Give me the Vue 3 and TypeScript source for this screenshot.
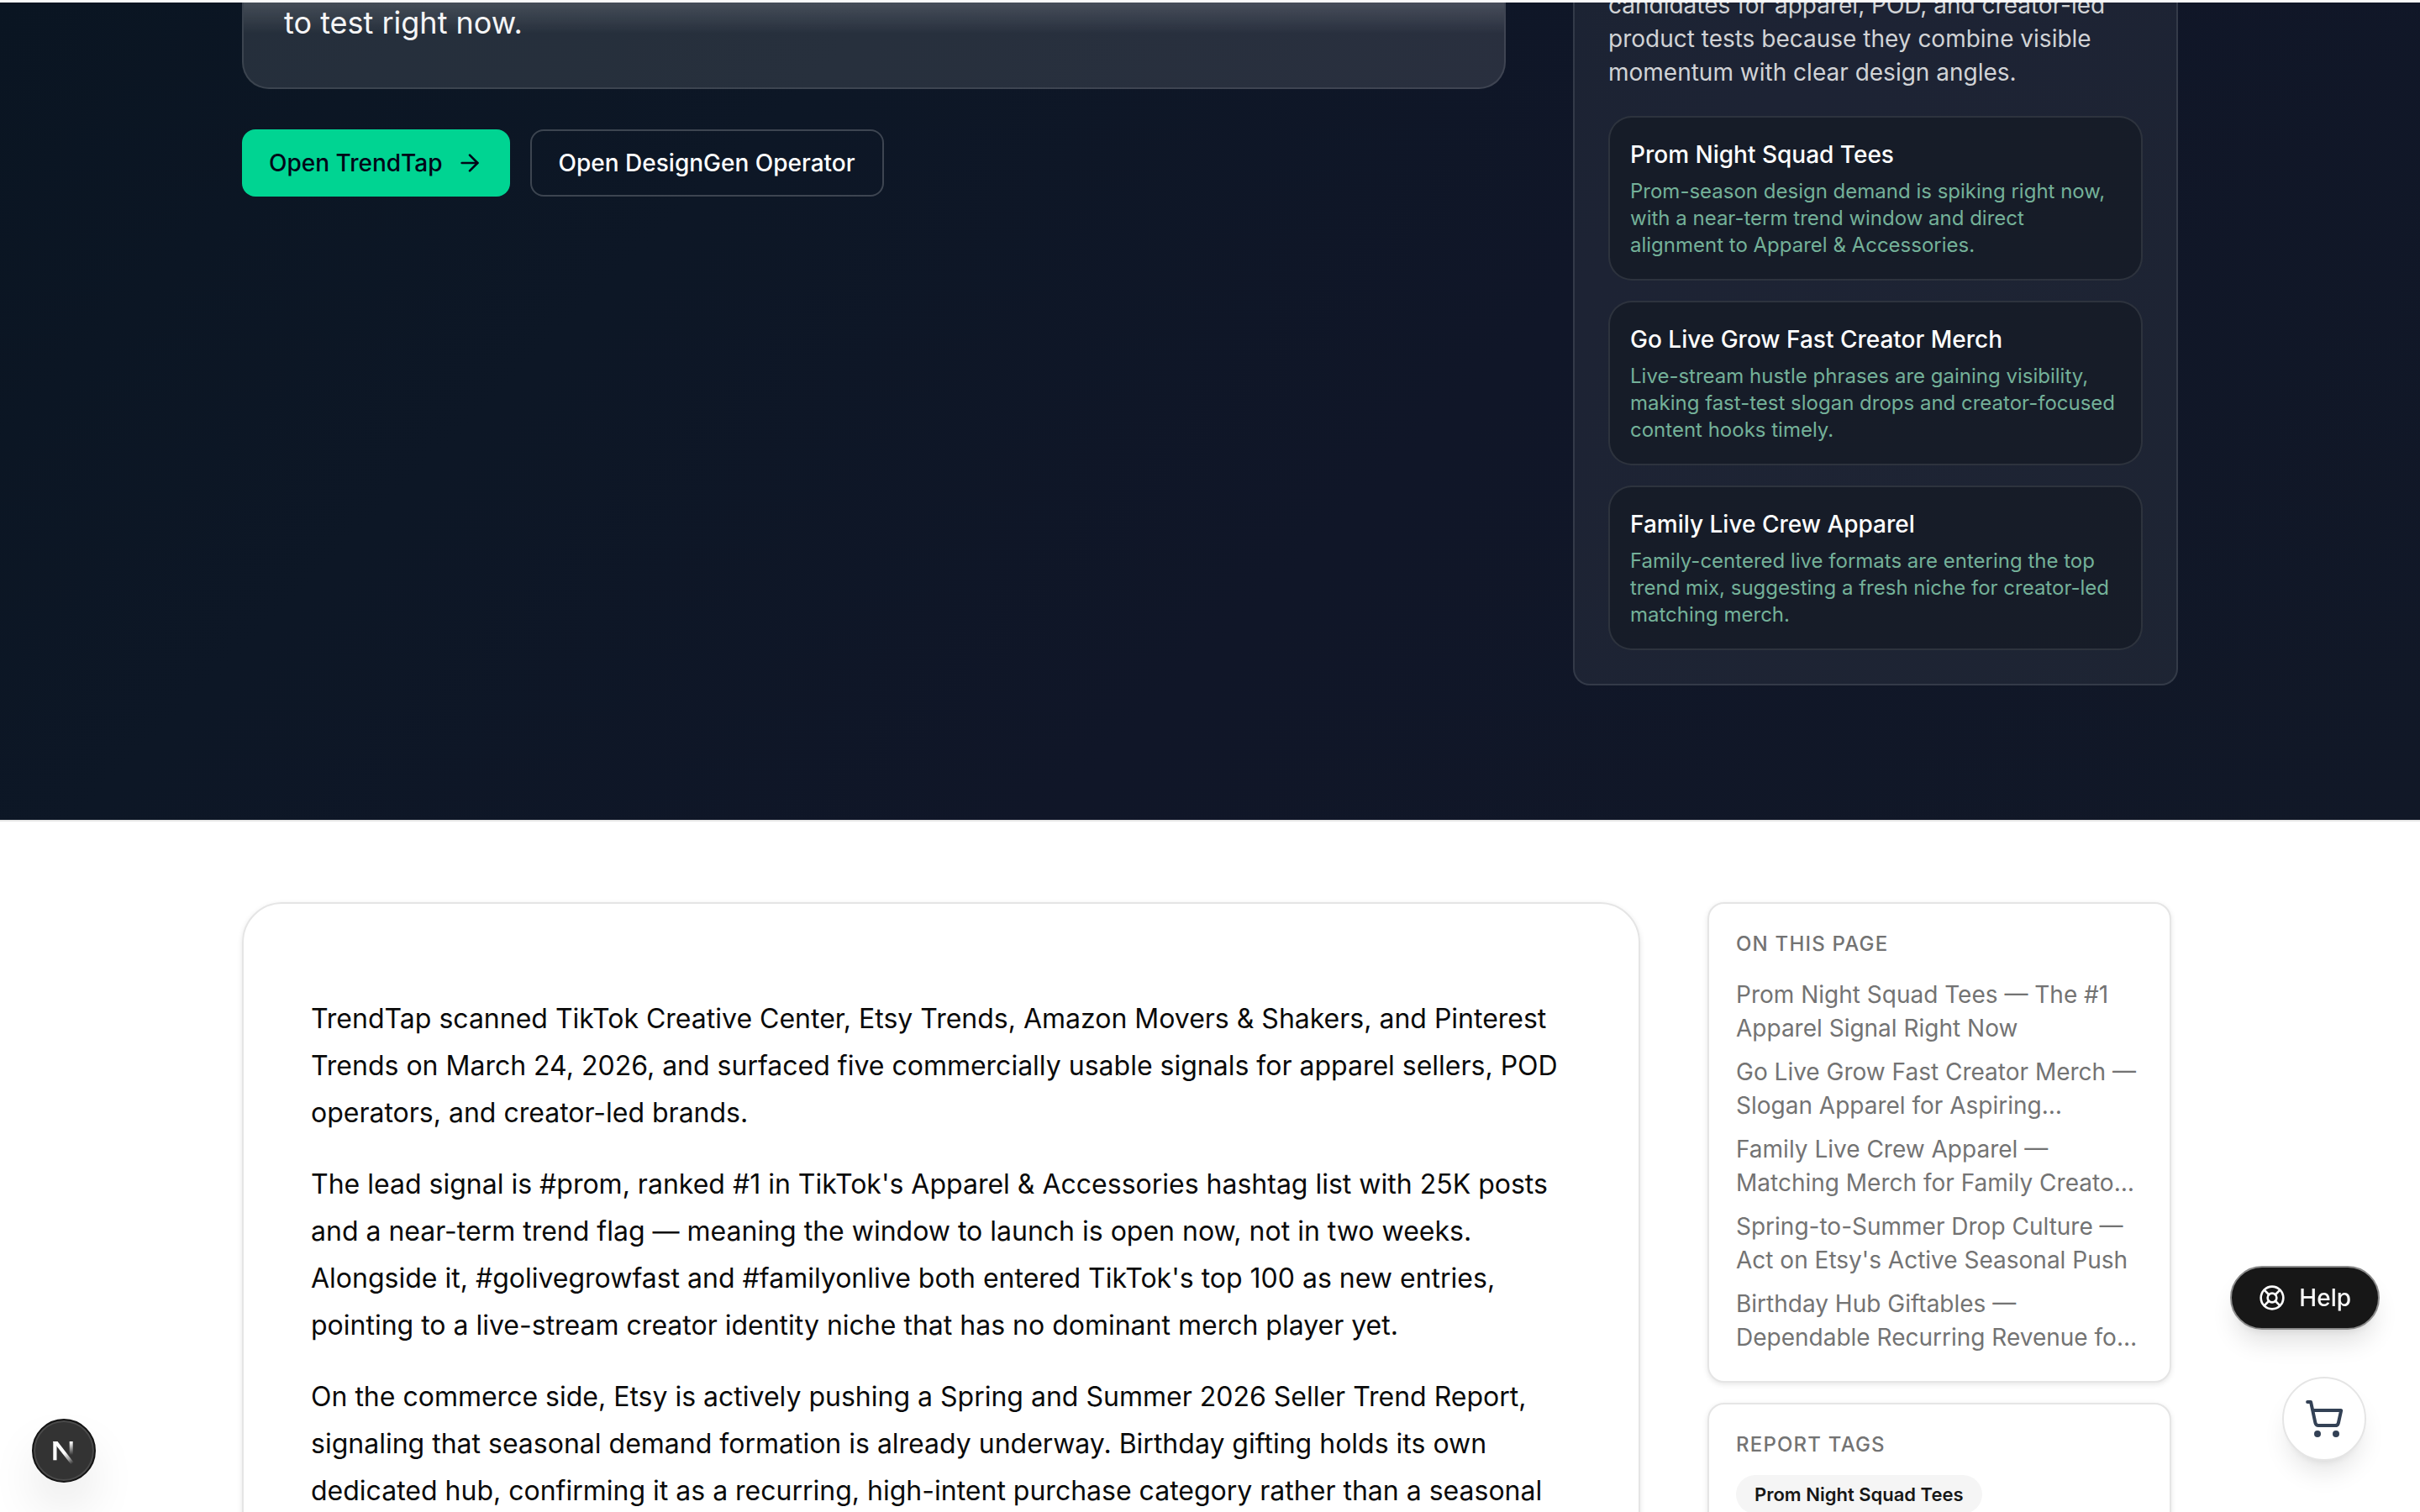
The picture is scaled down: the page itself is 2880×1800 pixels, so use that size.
<script setup lang="ts">
interface Pick {
  title: string
  text: string
}

const picks: Pick[] = [
  {
    title: 'Prom Night Squad Tees',
    text: 'Prom-season design demand is spiking right now, with a near-term trend window and direct alignment to Apparel & Accessories.',
  },
  {
    title: 'Go Live Grow Fast Creator Merch',
    text: 'Live-stream hustle phrases are gaining visibility, making fast-test slogan drops and creator-focused content hooks timely.',
  },
  {
    title: 'Family Live Crew Apparel',
    text: 'Family-centered live formats are entering the top trend mix, suggesting a fresh niche for creator-led matching merch.',
  },
]

const paragraphs: string[] = [
  'TrendTap scanned TikTok Creative Center, Etsy Trends, Amazon Movers & Shakers, and Pinterest Trends on March 24, 2026, and surfaced five commercially usable signals for apparel sellers, POD operators, and creator-led brands.',
  "The lead signal is #prom, ranked #1 in TikTok's Apparel & Accessories hashtag list with 25K posts and a near-term trend flag — meaning the window to launch is open now, not in two weeks. Alongside it, #golivegrowfast and #familyonlive both entered TikTok's top 100 as new entries, pointing to a live-stream creator identity niche that has no dominant merch player yet.",
  'On the commerce side, Etsy is actively pushing a Spring and Summer 2026 Seller Trend Report, signaling that seasonal demand formation is already underway. Birthday gifting holds its own dedicated hub, confirming it as a recurring, high-intent purchase category rather than a seasonal',
]

const sections: string[] = [
  'Prom Night Squad Tees — The #1 Apparel Signal Right Now',
  'Go Live Grow Fast Creator Merch — Slogan Apparel for Aspiring…',
  'Family Live Crew Apparel — Matching Merch for Family Creato…',
  "Spring-to-Summer Drop Culture — Act on Etsy's Active Seasonal Push",
  'Birthday Hub Giftables — Dependable Recurring Revenue fo…',
]

const tags: string[] = ['Prom Night Squad Tees']
</script>

<template>
  <div class="page">
    <header class="topbar"></header>

    <section class="hero">
      <div class="container hero-grid">
        <div>
          <div class="summary">
            <p>to test right now.</p>
          </div>
          <div class="actions">
            <button type="button" class="btn btn-primary">
              Open TrendTap
              <svg class="icon" viewBox="0 0 24 24" aria-hidden="true">
                <path d="M5 12h14" />
                <path d="m12 5 7 7-7 7" />
              </svg>
            </button>
            <button type="button" class="btn btn-outline">Open DesignGen Operator</button>
          </div>
        </div>

        <aside class="panel">
          <p class="panel-text">
            candidates for apparel, POD, and creator-led product tests because they combine visible momentum with clear
            design angles.
          </p>
          <div class="picks">
            <article v-for="pick in picks" :key="pick.title" class="pick">
              <h3>{{ pick.title }}</h3>
              <p>{{ pick.text }}</p>
            </article>
          </div>
        </aside>
      </div>
    </section>

    <main class="container body-grid">
      <article class="report">
        <p v-for="(paragraph, i) in paragraphs" :key="i">{{ paragraph }}</p>
      </article>

      <aside class="side">
        <nav class="card" aria-labelledby="toc-title">
          <h2 id="toc-title">On this page</h2>
          <ul class="toc">
            <li v-for="section in sections" :key="section">
              <a href="#">{{ section }}</a>
            </li>
          </ul>
        </nav>
        <section class="card card-tags">
          <h2>Report tags</h2>
          <span v-for="tag in tags" :key="tag" class="tag">{{ tag }}</span>
        </section>
      </aside>
    </main>

    <button type="button" class="help">
      <svg class="icon" viewBox="0 0 24 24" aria-hidden="true">
        <circle cx="12" cy="12" r="10" />
        <path d="m4.93 4.93 4.24 4.24" />
        <path d="m14.83 9.17 4.24-4.24" />
        <path d="m14.83 14.83 4.24 4.24" />
        <path d="m9.17 14.83-4.24 4.24" />
        <circle cx="12" cy="12" r="4" />
      </svg>
      Help
    </button>

    <button type="button" class="cart" aria-label="Cart">
      <svg viewBox="0 0 24 24" aria-hidden="true">
        <circle cx="8" cy="21" r="1" />
        <circle cx="19" cy="21" r="1" />
        <path d="M2.05 2.05h2l2.66 12.42a2 2 0 0 0 2 1.58h9.78a2 2 0 0 0 1.95-1.57l1.65-7.43H5.12" />
      </svg>
    </button>

    <button type="button" class="devtools" aria-label="Open developer tools">
      <svg viewBox="0 0 72 72" fill="none" aria-hidden="true">
        <defs>
          <linearGradient id="diagonal" gradientUnits="userSpaceOnUse" x1="36.5" y1="39" x2="46" y2="51.5">
            <stop stop-color="#fff" />
            <stop offset="0.6" stop-color="#fff" stop-opacity="0.5" />
            <stop offset="1" stop-color="#fff" stop-opacity="0" />
          </linearGradient>
          <linearGradient id="stem" gradientUnits="userSpaceOnUse" x1="45" y1="26" x2="45" y2="41">
            <stop stop-color="#fff" />
            <stop offset="1" stop-color="#fff" stop-opacity="0" />
          </linearGradient>
        </defs>
        <path d="M23.3 25h4.2v22.3h-4.2z" fill="#fff" />
        <path d="M23.3 25h5.2L47.8 50l-3.2 2.4L23.3 25.2z" fill="url(#diagonal)" />
        <path d="M42.7 25h4v16h-4z" fill="url(#stem)" />
      </svg>
    </button>
  </div>
</template>

<style>
body {
  background: #fff;
  overflow: hidden;
}
</style>

<style scoped>
.page {
  height: 100vh;
  overflow: hidden;
  font-family: Inter, "Noto Sans", sans-serif;
  font-size: 28px;
  line-height: 40px;
  color: #0a0a0a;
}

.page *,
.page *::before {
  box-sizing: border-box;
}

h2,
h3,
p,
ul {
  margin: 0;
  padding: 0;
}

button {
  font: inherit;
  cursor: pointer;
}

.topbar {
  position: fixed;
  inset: 0 0 auto;
  z-index: 5;
  height: 3px;
  background: #fafafa;
}

.container {
  width: 80%;
  margin: 0 auto;
}

.icon {
  width: 32px;
  height: 32px;
  fill: none;
  stroke: currentColor;
  stroke-width: 2;
  stroke-linecap: round;
  stroke-linejoin: round;
}

/* The hero is scrolled: its first lines pass under the top bar. */
.hero {
  margin-top: -14px;
  padding-bottom: 160px;
  border-bottom: 2px solid #e5e5e5;
  background: linear-gradient(135deg, #0a1522 0%, #0d1726 28%, #101628 58%, #111827 100%) padding-box;
}

.hero-grid {
  display: grid;
  grid-template-columns: minmax(0, 1fr) 720px;
  gap: 80px;
}

.summary {
  padding: 12px 48px 48px;
  border: 2px solid rgba(255, 255, 255, 0.1);
  border-top: 0;
  border-radius: 0 0 32px 32px;
  background:
    linear-gradient(180deg, rgba(255, 255, 255, 0.15) 16px, rgba(255, 255, 255, 0) 54px) no-repeat,
    rgba(255, 255, 255, 0.11);
  color: #f5f5f6;
  font-size: 36px;
  line-height: 58px;
}

.actions {
  display: flex;
  gap: 24px;
  margin-top: 48px;
}

.btn {
  display: flex;
  align-items: center;
  gap: 16px;
  height: 80px;
  padding: 0 32px;
  border: 0;
  border-radius: 16px;
  font-weight: 500;
}

.btn-primary {
  background: #00d492;
  color: #020618;
}

.btn-outline {
  border: 2px solid rgba(255, 255, 255, 0.2);
  background: transparent;
  color: #fff;
}

.panel {
  padding: 0 40px 40px;
  border: 2px solid rgba(255, 255, 255, 0.1);
  border-top: 0;
  border-radius: 0 0 20px 20px;
  background: rgba(240, 255, 248, 0.06);
}

.panel-text {
  color: #d1d3d6;
}

.picks {
  display: grid;
  gap: 24px;
  margin-top: 32px;
}

.pick {
  padding: 24px;
  border: 2px solid rgba(255, 255, 255, 0.1);
  border-radius: 28px;
  background: rgba(20, 26, 36, 0.7);
}

.pick h3 {
  color: #fff;
  font-size: 28px;
  font-weight: 500;
  line-height: 40px;
}

.pick p {
  margin-top: 8px;
  color: #74b199;
  font-size: 24px;
  line-height: 32px;
}

.body-grid {
  display: grid;
  grid-template-columns: minmax(0, 1fr) 560px;
  gap: 80px;
  align-items: start;
  padding-top: 96px;
}

.report {
  padding: 80px;
  border: 2px solid #e5e5e5;
  border-radius: 48px;
  box-shadow: 0 2px 6px rgba(0, 0, 0, 0.1);
  font-size: 32px;
  line-height: 56px;
}

.report p {
  margin-top: 29px;
}

.side {
  display: grid;
  gap: 24px;
  padding-right: 8px;
}

.card {
  padding: 32px;
  border: 2px solid #e5e5e5;
  border-radius: 20px;
  background: #fff;
  box-shadow: 0 2px 6px rgba(0, 0, 0, 0.1);
}

.card h2 {
  color: #737373;
  font-size: 24px;
  font-weight: 500;
  line-height: 32px;
  letter-spacing: 0.05em;
  text-transform: uppercase;
}

.toc {
  display: grid;
  gap: 12px;
  margin-top: 24px;
  list-style: none;
}

.toc a {
  display: block;
  color: #737373;
  text-decoration: none;
}

.card-tags {
  display: flex;
  flex-direction: column;
  align-items: flex-start;
  gap: 20px;
}

.tag {
  padding: 6px 22px;
  border-radius: 24px;
  background: #f5f5f5;
  color: #171717;
  font-size: 22px;
  font-weight: 600;
  line-height: 34px;
}

.help {
  position: fixed;
  right: 48px;
  bottom: 217px;
  display: flex;
  align-items: center;
  gap: 16px;
  height: 76px;
  padding: 0 32px;
  border: 2px solid #8b8b8b;
  border-radius: 38px;
  background: #171717;
  box-shadow: 0 20px 30px -6px rgba(0, 0, 0, 0.12), 0 8px 12px -8px rgba(0, 0, 0, 0.1);
  color: #fafafa;
  font-weight: 500;
}

.cart {
  position: fixed;
  right: 64px;
  bottom: 61px;
  display: grid;
  place-items: center;
  width: 100px;
  height: 100px;
  padding: 0;
  border: 2px solid #e5e5e5;
  border-radius: 50%;
  background: #fff;
  box-shadow: 0 20px 30px -6px rgba(0, 0, 0, 0.1), 0 8px 12px -8px rgba(0, 0, 0, 0.1);
}

.cart svg {
  width: 48px;
  height: 48px;
  fill: none;
  stroke: #334155;
  stroke-width: 2;
  stroke-linecap: round;
  stroke-linejoin: round;
}

.devtools {
  position: fixed;
  left: 38px;
  bottom: 35px;
  display: grid;
  place-items: center;
  width: 76px;
  height: 76px;
  padding: 0;
  border: 2px solid #141414;
  border-radius: 50%;
  background: #333;
  box-shadow: inset 0 0 0 2px #4a4a4a, 0 32px 64px -16px rgba(0, 0, 0, 0.24);
}

.devtools svg {
  width: 72px;
  height: 72px;
}
</style>
